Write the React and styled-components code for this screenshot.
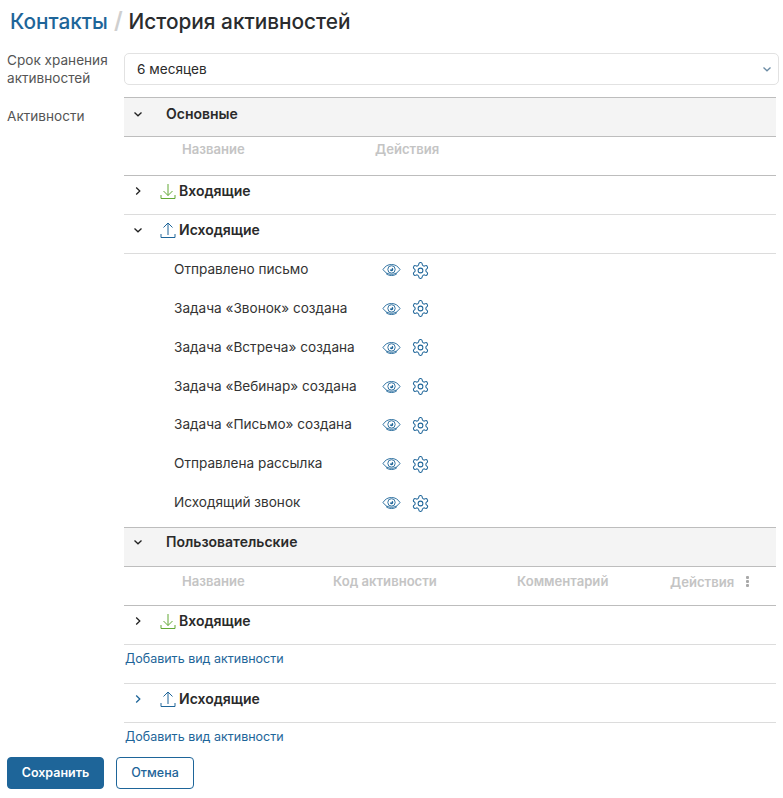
import React from 'react';
import styled, { createGlobalStyle } from 'styled-components';

const GlobalStyle = createGlobalStyle`
  html, body {
    margin: 0;
    padding: 0;
    background: #fff;
    font-family: 'Inter', 'Liberation Sans', sans-serif;
    color: #2a2a2a;
  }
`;

const Page = styled.div`
  width: 783px;
  height: 798px;
  overflow: hidden;
  box-sizing: border-box;
  padding: 9px 4px 0 7px;
`;

const Breadcrumbs = styled.h1`
  margin: 0 0 17px 3px;
  font-size: 20.8px;
  line-height: 24px;
  font-weight: 500;
  color: #2a2c2e;
`;

const Crumb = styled.span`
  color: #1e6599;
`;

const Slash = styled.span`
  color: #cfcfcf;
  margin: 0 6px;
  font-weight: 600;
  font-size: 23px;
`;

const FormRow = styled.div`
  display: grid;
  grid-template-columns: 117px 1fr;
  margin-bottom: ${(p) => p.$gap || 0}px;
`;

const Label = styled.div`
  font-size: 13.6px;
  line-height: 18px;
  color: #555;
  padding-top: ${(p) => p.$top || 0}px;
`;

const Select = styled.div`
  height: 32px;
  margin-top: 2px;
  box-sizing: border-box;
  display: flex;
  align-items: center;
  justify-content: space-between;
  padding: 0 6px 0 12px;
  border: 1px solid #e2e2e2;
  border-radius: 5px;
  font-size: 13.6px;
  color: #2a2a2a;
`;

const Table = styled.div`
  width: 652px;
`;

const SectionHead = styled.div`
  height: 40px;
  box-sizing: border-box;
  display: flex;
  align-items: flex-start;
  padding: ${(p) => p.$top}px 0 0 9px;
  background: #f4f4f4;
  border-top: 1px solid #bdbdbd;
  border-bottom: 1px solid #bdbdbd;
  font-size: 14px;
  line-height: 16px;
  font-weight: 600;
`;

const SectionTitle = styled.span`
  margin-left: 23px;
`;

const ColumnHead = styled.div`
  height: 39px;
  box-sizing: border-box;
  display: grid;
  grid-template-columns: ${(p) => p.$cols};
  align-items: start;
  padding-top: ${(p) => p.$top}px;
  border-bottom: 1px solid #bdbdbd;
  font-size: 13.1px;
  line-height: 16px;
  font-weight: 600;
  color: #c4c4c4;
`;

const ColumnLast = styled.span`
  display: flex;
  align-items: center;
  gap: 12px;
  padding-top: 1px;
`;

const GroupRow = styled.div`
  height: ${(p) => (p.$top ? 40 : 39)}px;
  box-sizing: border-box;
  display: flex;
  align-items: flex-start;
  padding: 7px 0 0 9px;
  border-bottom: 1px solid #dcdcdc;
  border-top: ${(p) => (p.$top ? '1px solid #dcdcdc' : '0')};
  font-size: 14px;
  line-height: 16px;
  font-weight: 600;
`;

const ToggleBox = styled.span`
  width: 10px;
  height: 16px;
  display: flex;
  align-items: center;
  justify-content: center;
  margin-right: ${(p) => p.$space || 0}px;
`;

const GroupIcon = styled.span`
  width: 16px;
  height: 16px;
  margin-right: 3px;
  display: flex;
`;

const ItemList = styled.div`
  padding-bottom: 1px;
`;

const Item = styled.div`
  height: 38.85px;
  box-sizing: border-box;
  display: grid;
  grid-template-columns: 208px 30px 30px;
  padding: 7px 0 0 50px;
  font-size: 13.6px;
  line-height: 16px;
  color: #333;
`;

const ItemIcon = styled.span`
  display: flex;
  height: 18px;
  align-items: center;
  margin-left: ${(p) => p.$shift || 0}px;
`;

const AddLink = styled.a`
  display: block;
  height: ${(p) => p.$h}px;
  padding-top: 6px;
  box-sizing: border-box;
  margin-left: 1px;
  font-size: 12.5px;
  line-height: 16px;
  color: #1e6599;
`;

const Buttons = styled.div`
  display: flex;
  gap: 12px;
`;

const Button = styled.button`
  height: 32px;
  box-sizing: border-box;
  padding: 0;
  width: ${(p) => p.$w}px;
  border-radius: 4px;
  border: 1px solid #1e6599;
  background: ${(p) => (p.$primary ? '#1e6599' : '#fff')};
  color: ${(p) => (p.$primary ? '#fff' : '#1e6599')};
  font-family: inherit;
  font-size: 12.5px;
  font-weight: ${(p) => (p.$primary ? 600 : 500)};
`;

const Chevron = ({ dir = 'down', color = '#222' }) => (
  <svg width="10" height="10" viewBox="0 0 10 10" fill="none" stroke={color} strokeWidth="1.3">
    {dir === 'down' ? <path d="M1.5 3.5 5 6.8 8.5 3.5" /> : <path d="M3.2 1.5 6.8 5 3.2 8.5" />}
  </svg>
);

const Transfer = ({ up, color }) => (
  <svg width="16" height="16" viewBox="0 0 16 16" fill="none" stroke={color} strokeWidth="1">
    <path d="M1 12V15.5H15V12" />
    {up ? <path d="M8 13V1M3.5 5.5 8 1 12.5 5.5" /> : <path d="M8 1V12.5M3.5 8 8 12.5 12.5 8" />}
  </svg>
);

const Eye = () => (
  <svg width="19" height="16" viewBox="0 0 19 16" fill="none" stroke="#1e6599" strokeWidth="0.9">
    <path d="M1 7.5C3.2 4 6 2.5 9.5 2.5S15.8 4 18 7.5C15.8 10.8 13 12.3 9.5 12.3S3.2 10.8 1 7.5Z" />
    <path d="M4 11.5C6.5 14.2 12.5 14.2 15 11.5" />
    <circle cx="9.5" cy="7.4" r="3.7" />
    <path d="M10 5.8A1.7 1.7 0 1 1 7.9 7.4L9.6 7.4Z" fill="#1e6599" stroke="none" />
  </svg>
);

const Gear = () => (
  <svg width="19" height="19" viewBox="0 0 24 24" fill="none" stroke="#1e6599" strokeWidth="1.3">
    <path d="M12.2 2h-.4a2 2 0 0 0-2 2v.2a2 2 0 0 1-1 1.7l-.4.3a2 2 0 0 1-2 0l-.2-.1a2 2 0 0 0-2.7.7l-.2.4a2 2 0 0 0 .7 2.7l.2.1a2 2 0 0 1 1 1.7v.5a2 2 0 0 1-1 1.8l-.2.1a2 2 0 0 0-.7 2.7l.2.4a2 2 0 0 0 2.7.7l.2-.1a2 2 0 0 1 2 0l.4.3a2 2 0 0 1 1 1.7v.2a2 2 0 0 0 2 2h.4a2 2 0 0 0 2-2v-.2a2 2 0 0 1 1-1.7l.4-.3a2 2 0 0 1 2 0l.2.1a2 2 0 0 0 2.7-.7l.2-.4a2 2 0 0 0-.7-2.7l-.2-.1a2 2 0 0 1-1-1.8v-.5a2 2 0 0 1 1-1.7l.2-.1a2 2 0 0 0 .7-2.7l-.2-.4a2 2 0 0 0-2.7-.7l-.2.1a2 2 0 0 1-2 0l-.4-.3a2 2 0 0 1-1-1.7V4a2 2 0 0 0-2-2Z" />
    <circle cx="12" cy="12" r="3" />
  </svg>
);

const Dots = () => (
  <svg width="3" height="11" viewBox="0 0 3 11" fill="#a8a8a8">
    <rect x="0" y="0" width="3" height="3" rx="1" />
    <rect x="0" y="4" width="3" height="3" rx="1" />
    <rect x="0" y="8" width="3" height="3" rx="1" />
  </svg>
);

const outgoing = [
  'Отправлено письмо',
  'Задача «Звонок» создана',
  'Задача «Встреча» создана',
  'Задача «Вебинар» создана',
  'Задача «Письмо» создана',
  'Отправлена рассылка',
  'Исходящий звонок',
];

const Group = ({ open, up, title, top, toggleColor }) => (
  <GroupRow $top={top}>
    <ToggleBox $space={17}>
      <Chevron dir={open ? 'down' : 'right'} color={toggleColor} />
    </ToggleBox>
    <GroupIcon>
      <Transfer up={up} color={up ? '#1e6599' : '#62a835'} />
    </GroupIcon>
    {title}
  </GroupRow>
);

export default function App() {
  return (
    <>
      <GlobalStyle />
      <Page>
        <Breadcrumbs>
          <Crumb>Контакты</Crumb>
          <Slash>/</Slash>
          История активностей
        </Breadcrumbs>

        <FormRow $gap={10}>
          <Label>Срок хранения активностей</Label>
          <Select>
            6 месяцев
            <Chevron color="#6b8ba4" />
          </Select>
        </FormRow>

        <FormRow>
          <Label $top={10}>Активности</Label>
          <Table>
            <SectionHead $top={8}>
              <ToggleBox>
                <Chevron />
              </ToggleBox>
              <SectionTitle>Основные</SectionTitle>
            </SectionHead>
            <ColumnHead $cols="58px 193px 1fr" $top={4}>
              <span />
              <span>Название</span>
              <span>Действия</span>
            </ColumnHead>
            <Group title="Входящие" />
            <Group open up title="Исходящие" />
            <ItemList>
              {outgoing.map((name) => (
                <Item key={name}>
                  <span>{name}</span>
                  <ItemIcon>
                    <Eye />
                  </ItemIcon>
                  <ItemIcon $shift={-1}>
                    <Gear />
                  </ItemIcon>
                </Item>
              ))}
            </ItemList>

            <SectionHead $top={6}>
              <ToggleBox>
                <Chevron />
              </ToggleBox>
              <SectionTitle>Пользовательские</SectionTitle>
            </SectionHead>
            <ColumnHead $cols="58px 151px 184px 153px 1fr" $top={6}>
              <span />
              <span>Название</span>
              <span>Код активности</span>
              <span>Комментарий</span>
              <ColumnLast>
                Действия
                <Dots />
              </ColumnLast>
            </ColumnHead>
            <Group title="Входящие" />
            <AddLink $h={38}>Добавить вид активности</AddLink>
            <Group up title="Исходящие" top toggleColor="#1e6599" />
            <AddLink $h={34}>Добавить вид активности</AddLink>
          </Table>
        </FormRow>

        <Buttons>
          <Button $primary $w={97}>
            Сохранить
          </Button>
          <Button $w={78}>Отмена</Button>
        </Buttons>
      </Page>
    </>
  );
}
